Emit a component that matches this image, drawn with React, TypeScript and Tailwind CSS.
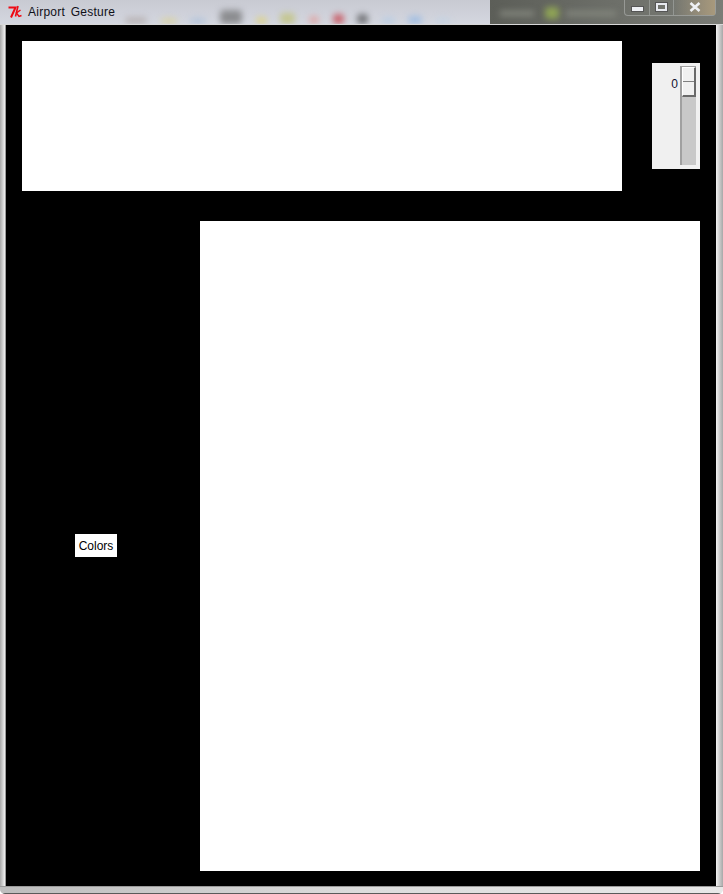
const lightBlobs = [
  "h-[7px] w-[22px] bg-[#b9b4b6]",
  "h-[6px] w-[16px] bg-[#d8d2a8]",
  "h-[6px] w-[16px] bg-[#b4c4da]",
  "h-[14px] w-[22px] bg-[#8c8d90]",
  "h-[7px] w-[11px] bg-[#dcd28c]",
  "h-[11px] w-[15px] bg-[#c4c690]",
  "h-[8px] w-[10px] bg-[#dda8a8]",
  "h-[10px] w-[11px] bg-[#c8626c]",
  "h-[10px] w-[11px] bg-[#737478]",
  "h-[7px] w-[13px] bg-[#bccde2]",
  "h-[8px] w-[14px] bg-[#a2bee2]",
  "h-[6px] w-[14px] bg-[#c4d2e2]",
];

export default function App() {
  return (
    <div className="flex h-[894px] w-[723px] flex-col overflow-hidden rounded-b-[5px] bg-[#e4e4e4] font-['Liberation_Sans',sans-serif]">
      {/* title bar: glass over a blurred desktop */}
      <div className="flex h-[25px] shrink-0 overflow-hidden border-b border-[#d8d8d8] bg-gradient-to-b from-[#c8cad2] to-[#d4d7e0]">
        <svg className="ml-[8px] mt-[5px] h-[14px] w-[15px] shrink-0" viewBox="0 0 15 14" fill="none" stroke="#ee0a14">
          <path d="M0.5 2.5 H7.5 L3 12.5" strokeWidth="2" />
          <path d="M10 1 L7.5 11.5" strokeWidth="1.6" />
          <path d="M12.5 5 L8.5 8 L11 11.5 L13.5 10.5" strokeWidth="1.4" />
        </svg>
        <span className="ml-[5px] mt-[5px] shrink-0 text-[12px] leading-[15px] tracking-[0.25px] text-[#101018] [word-spacing:2px]">
          Airport Gesture
        </span>
        <div className="ml-[10px] mr-[40px] flex flex-1 items-end justify-between">
          {lightBlobs.map((c) => (
            <div key={c} className={`${c} rounded-sm blur-[3px]`} />
          ))}
        </div>
        <div className="flex w-[233px] shrink-0 bg-gradient-to-r from-[#5c5e58] via-[#6c6e68] to-[#7a7c76]">
          <div className="ml-[10px] mt-[11px] h-[5px] w-[34px] bg-[#85887f] blur-[3px]" />
          <div className="ml-[11px] mt-[7px] h-[12px] w-[14px] rounded bg-[#8fa455] blur-[3px]" />
          <div className="ml-[7px] mt-[11px] h-[5px] w-[50px] bg-[#85887f] blur-[3px]" />
          <div className="ml-[8px] flex h-[16px] w-[92px] rounded-b-[4px] border border-t-0 border-[#a9aca8]/70">
            <div className="flex w-[25px] items-end justify-center border-r border-[#a9aca8]/60 pb-[4px]">
              <div className="h-[4px] w-[11px] bg-[#eef0f4] outline outline-1 outline-[#555]" />
            </div>
            <div className="flex w-[24px] items-center justify-center border-r border-[#a9aca8]/60 pb-[1px]">
              <div className="h-[8px] w-[11px] border-2 border-[#e8eaf0] outline outline-1 outline-[#555]" />
            </div>
            <div className="flex flex-1 items-center justify-center bg-gradient-to-r from-transparent to-[#a8997c] pb-[1px]">
              <svg width="12" height="10" viewBox="0 0 12 10">
                <path d="M1.5 1 L10.5 9 M10.5 1 L1.5 9" stroke="#eef0f4" strokeWidth="2.6" />
              </svg>
            </div>
          </div>
        </div>
      </div>

      <div className="flex h-[861px] shrink-0">
        <div className="w-[6px] border-r border-[#9a9a9a] bg-gradient-to-r from-[#a8a8a8] to-[#f2f2f2]" />
        {/* window client */}
        <div className="h-[861px] w-[710px] shrink-0 bg-black px-[16px] pt-[16px]">
          <div className="flex h-[150px] items-center justify-between">
            <div className="h-[150px] w-[600px] bg-white" />
            {/* scale */}
            <div className="flex h-[106px] w-[48px] justify-end bg-[#f0f0f0] pr-[4px] pt-[3px]">
              <div className="mr-[2px] mt-[11px] text-[12px] leading-[15px] text-[#101030]">0</div>
              <div className="h-[99px] w-[16px] border-l-2 border-t border-[#a0a0a0] bg-[#c8c8c8]">
                <div className="flex h-[30px] w-[14px] flex-col justify-center border-b-2 border-l border-r-2 border-t border-b-[#696969] border-l-white border-r-[#696969] border-t-white bg-[#f0f0f0]">
                  <div className="h-px bg-[#808080]" />
                </div>
              </div>
            </div>
          </div>
          <div className="mt-[30px] flex h-[650px] gap-[30px]">
            <div className="flex w-[148px] items-center justify-center pb-[1px]">
              <div className="flex h-[23px] w-[42px] items-center justify-center bg-white text-[12px] text-black">Colors</div>
            </div>
            <div className="h-[650px] w-[500px] bg-white" />
          </div>
        </div>
        <div className="w-[7px] bg-gradient-to-l from-[#a8a8a8] to-[#f2f2f2]" />
      </div>

      {/* bottom frame */}
      <div className="h-[8px] shrink-0 border-b border-t border-b-[#5a5a5a] border-t-[#9a9a9a] bg-gradient-to-r from-[#bdbdbd] via-[#dcdcdc] to-[#e8e8e8]" />
    </div>
  );
}
